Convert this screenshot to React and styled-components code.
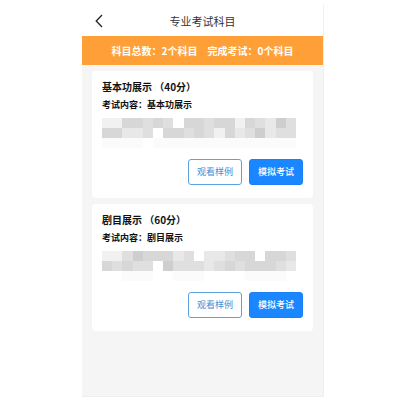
import React from 'react';
import styled, { createGlobalStyle, css } from 'styled-components';

const GlobalStyle = createGlobalStyle`
    * {
        box-sizing: border-box;
    }
    body {
        margin: 0;
        background: #fff;
        font-family: 'Noto Sans CJK SC', sans-serif;
        color: #111;
    }
    h1, h2, p {
        margin: 0;
    }
`

const Page = styled.div`
    display: flex;
    flex-direction: column;
    min-height: 100vh;
    padding: 5px 76px 3px 82px;
`

const Screen = styled.main`
    flex: 1;
    background: #f5f5f5;
    border-right: 1px solid #efefef;
    border-bottom: 1px solid #efefef;
`

const Header = styled.header`
    display: grid;
    grid-template-columns: 34px 1fr 34px;
    align-items: center;
    height: 31px;
    background: #fff;
`

const BackButton = styled.button`
    display: flex;
    justify-content: center;
    padding: 0;
    border: none;
    background: none;
    color: #222;
    cursor: pointer;
`

const Title = styled.h1`
    font-size: 11px;
    font-weight: 400;
    line-height: 16px;
    text-align: center;
    color: #333;
`

const Summary = styled.div`
    display: flex;
    justify-content: center;
    gap: 10px;
    padding: 6px 0;
    background: #ff9f38;
    color: #fff;
    font-size: 10px;
    font-weight: 700;
    line-height: 17px;
`

const CardList = styled.div`
    display: flex;
    flex-direction: column;
    gap: 6px;
    padding: 6px 10px;
`

const Card = styled.section`
    padding: 7px 10px 13px;
    border-radius: 4px;
    background: #fff;
`

const CardTitle = styled.h2`
    font-size: 10px;
    font-weight: 700;
    line-height: 18px;
`

const CardText = styled.p`
    font-size: 9px;
    font-weight: 700;
    line-height: 18px;
`

const Mosaic = styled.div`
    display: grid;
    grid-template-columns: repeat(19, 1fr);
    grid-auto-rows: 10px;
    margin: 4px 7px 11px 0;
`

const Cell = styled.span`
    background: ${props => props.$shade};
`

const Actions = styled.div`
    display: flex;
    justify-content: flex-end;
    gap: 7px;
`

const buttonStyles = css`
    width: 54px;
    height: 26px;
    padding: 0;
    border-radius: 3px;
    font-family: inherit;
    font-size: 9px;
    line-height: 16px;
    cursor: pointer;
`

const Button = styled.button`
    ${buttonStyles}
    border: 1px solid ${props => props.$primary ? '#1a80f8' : '#5ba3e0'};
    background: ${props => props.$primary ? '#1a86ff' : '#fff'};
    color: ${props => props.$primary ? '#fff' : '#3d8fd6'};
    font-weight: ${props => props.$primary ? 500 : 400};
`

// one letter per block, light to dark
const shades = {
    w: '#ffffff',
    f: '#fbfbfb',
    a: '#f1f1f1',
    b: '#e8e8e8',
    c: '#dfdfdf',
    d: '#d7d7d7',
    e: '#cecece',
}

const subjects = [
    {
        name: '基本功展示',
        score: 40,
        mosaic: 'aaddcdcwddcddadcbec' + 'ddbbcwddcdcadbcebcc' + 'ffffwffffffffffffff',
    },
    {
        name: '剧目展示',
        score: 60,
        mosaic: 'aacedddbcwbbcddwddc' + 'dcdccwecccbcdcdddcb' + 'wwfffwwfffwwwwffffw',
    },
]

const Subject = ({ subject }) => (
    <Card>
        <CardTitle>{subject.name} （{subject.score}分）</CardTitle>
        <CardText>考试内容：{subject.name}</CardText>
        <Mosaic aria-hidden='true'>
            {subject.mosaic.split('').map((key, index) => <Cell key={index} $shade={shades[key]} />)}
        </Mosaic>
        <Actions>
            <Button type='button'>观看样例</Button>
            <Button type='button' $primary>模拟考试</Button>
        </Actions>
    </Card>
)

const App = () => {
    return (
        <>
            <GlobalStyle />
            <Page>
                <Screen>
                    <Header>
                        <BackButton type='button' aria-label='返回'>
                            <svg width='8' height='14' viewBox='0 0 8 14' fill='none' stroke='currentColor' strokeWidth='1.3'>
                                <path d='M7 1 L1.2 7 L7 13' />
                            </svg>
                        </BackButton>
                        <Title>专业考试科目</Title>
                    </Header>
                    <Summary>
                        <span>科目总数：2个科目</span>
                        <span>完成考试：0个科目</span>
                    </Summary>
                    <CardList>
                        {subjects.map(subject => <Subject key={subject.name} subject={subject} />)}
                    </CardList>
                </Screen>
            </Page>
        </>
    )
}

export default App;
